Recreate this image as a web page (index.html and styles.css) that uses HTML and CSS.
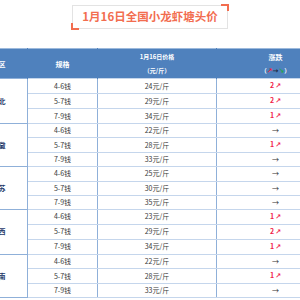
FILE: index.html
```html
<!DOCTYPE html>
<html lang="zh">
<head>
<meta charset="utf-8">
<link rel="stylesheet" href="styles.css">
</head>
<body>
<div class="page">
  <div class="title-wrap">
    <div class="title-box">
      <span class="corner tr"></span>
      <span class="corner bl"></span>
      <span class="title">1月16日全国小龙虾塘头价</span>
    </div>
  </div>
  <div class="table-clip">
    <table class="prices">
      <colgroup>
        <col class="c1"><col class="c2"><col class="c3"><col class="c4">
      </colgroup>
      <thead>
        <tr>
          <th>地区</th>
          <th>规格</th>
          <th class="two"><span class="ln">1月16日价格</span><span class="ln">（元/斤）</span></th>
          <th class="two"><span class="ln big">涨跌</span><span class="ln">（<span class="arr up">↗</span><span class="arr flat-h">→</span><span class="arr down">↘</span>）</span></th>
        </tr>
      </thead>
      <tbody>
        <tr class="grp"><td class="region" rowspan="3">湖北</td><td>4-6钱</td><td>24元/斤</td><td class="rise">2<span class="arr">↗</span></td></tr>
        <tr><td>5-7钱</td><td>29元/斤</td><td class="rise">2<span class="arr">↗</span></td></tr>
        <tr><td>7-9钱</td><td>34元/斤</td><td class="rise">1<span class="arr">↗</span></td></tr>
        <tr class="grp"><td class="region" rowspan="3">安徽</td><td>4-6钱</td><td>22元/斤</td><td class="flat">→</td></tr>
        <tr><td>5-7钱</td><td>28元/斤</td><td class="rise">1<span class="arr">↗</span></td></tr>
        <tr><td>7-9钱</td><td>33元/斤</td><td class="flat">→</td></tr>
        <tr class="grp"><td class="region" rowspan="3">江苏</td><td>4-6钱</td><td>25元/斤</td><td class="flat">→</td></tr>
        <tr><td>5-7钱</td><td>30元/斤</td><td class="flat">→</td></tr>
        <tr><td>7-9钱</td><td>35元/斤</td><td class="flat">→</td></tr>
        <tr class="grp"><td class="region" rowspan="3">江西</td><td>4-6钱</td><td>23元/斤</td><td class="rise">1<span class="arr">↗</span></td></tr>
        <tr><td>5-7钱</td><td>29元/斤</td><td class="rise">2<span class="arr">↗</span></td></tr>
        <tr><td>7-9钱</td><td>34元/斤</td><td class="rise">1<span class="arr">↗</span></td></tr>
        <tr class="grp"><td class="region" rowspan="3">湖南</td><td>4-6钱</td><td>22元/斤</td><td class="flat">→</td></tr>
        <tr><td>5-7钱</td><td>28元/斤</td><td class="rise">1<span class="arr">↗</span></td></tr>
        <tr><td>7-9钱</td><td>33元/斤</td><td class="flat">→</td></tr>
      </tbody>
    </table>
  </div>
</div>
</body>
</html>
```

FILE: styles.css
```css
html, body {
  margin: 0;
  padding: 0;
  background: #ffffff;
}

body {
  font-family: "Noto Sans CJK SC", "Noto Sans", sans-serif;
  width: 300px;
  height: 300px;
  overflow: hidden;
}

.page {
  width: 300px;
}

.title-wrap {
  display: flex;
  justify-content: center;
  padding-top: 5px;
}

.title-box {
  position: relative;
  box-sizing: border-box;
  width: 156px;
  height: 24px;
  border: 1px solid #e3e3e3;
  display: flex;
  align-items: center;
  justify-content: center;
}

.title {
  font-size: 11.5px;
  font-weight: bold;
  color: #f26d4f;
  line-height: 1;
}

.corner {
  position: absolute;
  width: 6px;
  height: 5px;
  border-color: #f26d4f;
  border-style: solid;
  border-width: 0;
}

.corner.tr {
  top: -2px;
  right: -2px;
  border-top-width: 2px;
  border-right-width: 2px;
}

.corner.bl {
  bottom: -2px;
  left: -2px;
  border-bottom-width: 2px;
  border-left-width: 2px;
}

.table-clip {
  width: 300px;
  overflow: hidden;
  margin-top: 19px;
}

.prices {
  margin-left: -31px;
  border-collapse: collapse;
  table-layout: fixed;
  width: 365px;
}

.c1 { width: 58px; }
.c2 { width: 70px; }
.c3 { width: 119px; }
.c4 { width: 118px; }

.prices th {
  background: #4f81bd;
  color: #ffffff;
  font-weight: bold;
  font-size: 7px;
  height: 29px;
  padding: 0;
  text-align: center;
  vertical-align: middle;
  border-top: 1px solid #9cb9dc;
  border-left: 1px solid #4f81bd;
  border-right: 1px solid #4f81bd;
}

.prices th.two .ln {
  display: block;
  line-height: 14px;
  font-size: 6px;
}

.prices th.two .ln.big {
  font-size: 7px;
}

.arr {
  font-family: "DejaVu Sans", sans-serif;
  font-size: 7px;
  font-weight: bold;
}

.arr.up { color: #e8203c; }
.arr.flat-h { color: #1d2a44; }
.arr.down { color: #1fa84a; }

.prices td {
  height: 13.2px;
  padding: 0;
  font-size: 7px;
  line-height: 13px;
  color: #3a3a3a;
  text-align: center;
  vertical-align: middle;
  border-top: 1px solid #c5d6ec;
  border-bottom: 1px solid #c5d6ec;
  border-left: 1px solid #8fb0d9;
  border-right: 1px solid #8fb0d9;
}

.prices td.region {
  color: #1f3a6a;
  font-weight: bold;
  border-top: 1px solid #8fb0d9;
  border-bottom: 1px solid #8fb0d9;
}

.prices td.rise {
  color: #f0224a;
  font-weight: bold;
}

.prices td.rise .arr {
  margin-left: 1px;
}

.prices td.flat {
  color: #333333;
}
```
